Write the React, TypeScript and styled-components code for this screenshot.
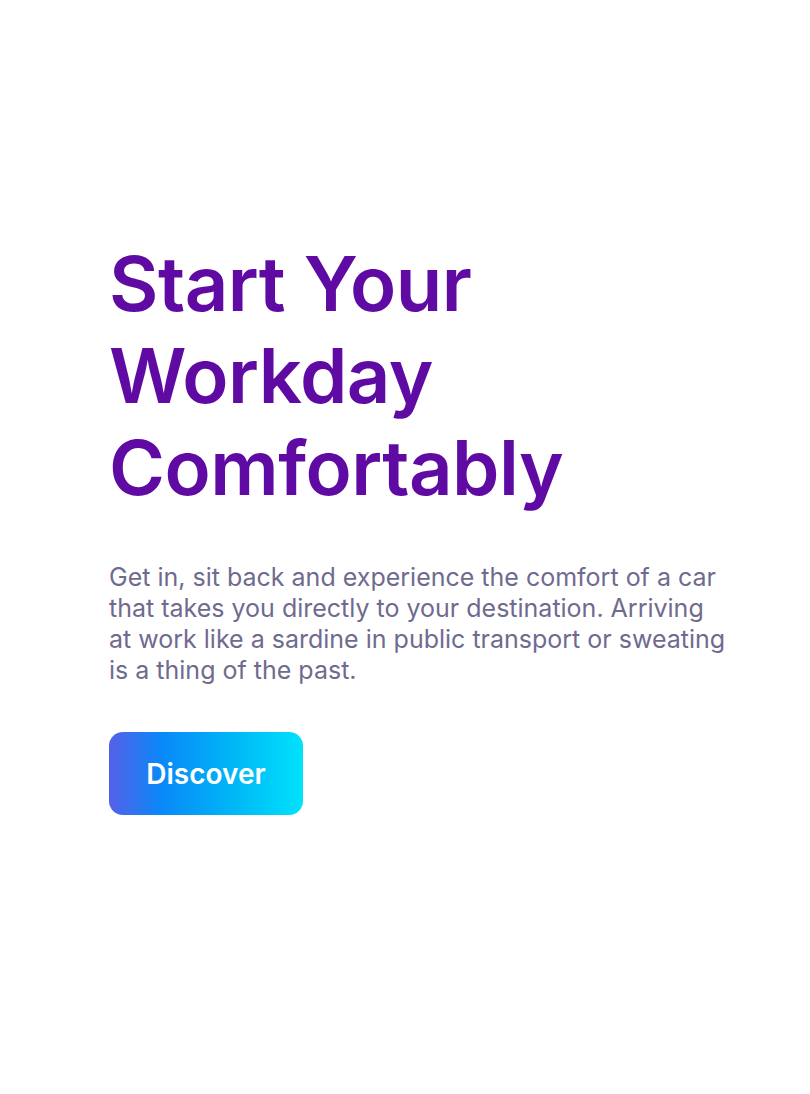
import React from "react";
import styled, { createGlobalStyle } from "styled-components";

const Global = createGlobalStyle`
  html, body { margin: 0; padding: 0; background: #ffffff; }
  body { font-family: Inter, "Noto Sans", sans-serif; }
`;

const Page = styled.main`
  min-height: 1094px;
  box-sizing: border-box;
  padding: 237px 60px 0 109px;
  display: flex;
  flex-direction: column;
  align-items: flex-start;
`;

const Title = styled.h1`
  margin: 0;
  font-family: Inter, sans-serif;
  font-weight: 600;
  font-size: 76px;
  line-height: 92px;
  letter-spacing: -0.5px;
  color: #5f0aa3;
`;

const Lead = styled.p`
  margin: 49px 0 0;
  max-width: 622px;
  font-family: Inter, sans-serif;
  font-size: 25px;
  line-height: 31px;
  color: #6f6b8f;
`;

const Button = styled.button`
  margin-top: 46px;
  width: 194px;
  height: 83px;
  border: none;
  border-radius: 14px;
  background: linear-gradient(90deg, #5560e8 0%, #0a88f8 27%, #00b8f6 65%, #00e2fb 100%);
  color: #ffffff;
  font-family: Inter, sans-serif;
  font-weight: 600;
  font-size: 28px;
  cursor: pointer;
`;

export default function App() {
  return (
    <>
      <Global />
      <Page>
        <Title>
          Start Your
          <br />
          Workday
          <br />
          Comfortably
        </Title>
        <Lead>
          Get in, sit back and experience the comfort of a car that takes you directly to your
          destination. Arriving at work like a sardine in public transport or sweating is a thing of
          the past.
        </Lead>
        <Button>Discover</Button>
      </Page>
    </>
  );
}
